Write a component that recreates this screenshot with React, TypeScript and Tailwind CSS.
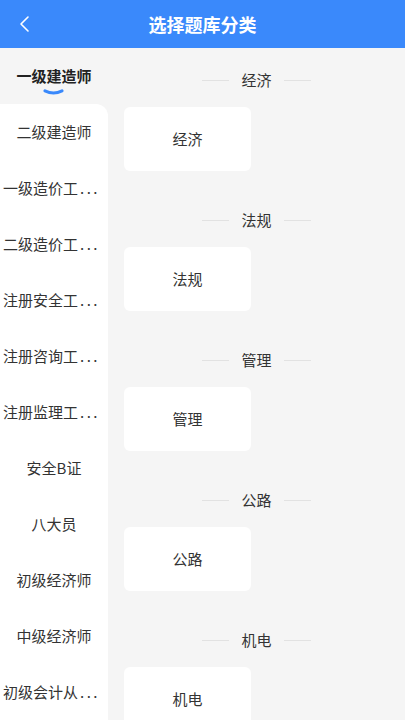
import React from 'react';

const sideItems = [
  { t: '二级建造师' },
  { t: '一级造价工', cut: true },
  { t: '二级造价工', cut: true },
  { t: '注册安全工', cut: true },
  { t: '注册咨询工', cut: true },
  { t: '注册监理工', cut: true },
  { t: '安全B证' },
  { t: '八大员' },
  { t: '初级经济师' },
  { t: '中级经济师' },
  { t: '初级会计从', cut: true },
];

const sections = ['经济', '法规', '管理', '公路', '机电'];

export default function App() {
  return (
    <div
      className="w-[405px] h-[720px] overflow-hidden bg-[#f5f5f5] flex flex-col"
      style={{ fontFamily: '"Noto Sans CJK SC", "Noto Sans", sans-serif' }}
    >
      {/* header */}
      <div className="relative h-12 shrink-0 bg-[#3a89fb] flex items-center justify-center">
        <svg className="absolute left-[17px] top-[15px]" width="14" height="18" viewBox="0 0 14 18">
          <path d="M11 2 L4 9 L11 16" fill="none" stroke="white" strokeWidth="1.6" strokeLinecap="round" strokeLinejoin="round" />
        </svg>
        <h1 className="text-[18px] font-bold text-white">选择题库分类</h1>
      </div>

      <div className="flex flex-1 min-h-0">
        {/* sidebar */}
        <div className="w-[108px] shrink-0 flex flex-col">
          <div className="relative h-14 flex items-center justify-center">
            <span className="text-[15px] font-bold text-[#222]">一级建造师</span>
            <svg className="absolute left-[43px] top-[41px]" width="21" height="7" viewBox="0 0 21 7">
              <path d="M2 1.8 Q10.5 6.2 19 1.8" fill="none" stroke="#3a89fb" strokeWidth="3" strokeLinecap="round" />
            </svg>
          </div>
          <div className="flex-1 bg-white rounded-tr-xl">
            {sideItems.map((it) => (
              <div
                key={it.t}
                className={it.cut ? 'h-14 flex items-center pl-[3px]' : 'h-14 flex items-center justify-center'}
              >
                <p className="text-[15px] text-[#333] whitespace-nowrap">
                  {it.t}
                  {it.cut && <span className="tracking-[2.5px] pl-[2px]">...</span>}
                </p>
              </div>
            ))}
          </div>
        </div>

        {/* content */}
        <div className="flex-1 flex flex-col">
          {sections.map((s) => (
            <div key={s} className="pt-4 pb-[17px] shrink-0">
              <div className="h-8 flex items-center justify-center gap-3">
                <span className="w-[27px] h-px bg-[#e2e2e2]" />
                <span className="text-[15px] text-[#333]">{s}</span>
                <span className="w-[27px] h-px bg-[#e2e2e2]" />
              </div>
              <div className="mt-[11px] ml-4 w-[127px] h-16 bg-white rounded-md flex items-center justify-center">
                <span className="text-[15px] text-[#333]">{s}</span>
              </div>
            </div>
          ))}
        </div>
      </div>
    </div>
  );
}
